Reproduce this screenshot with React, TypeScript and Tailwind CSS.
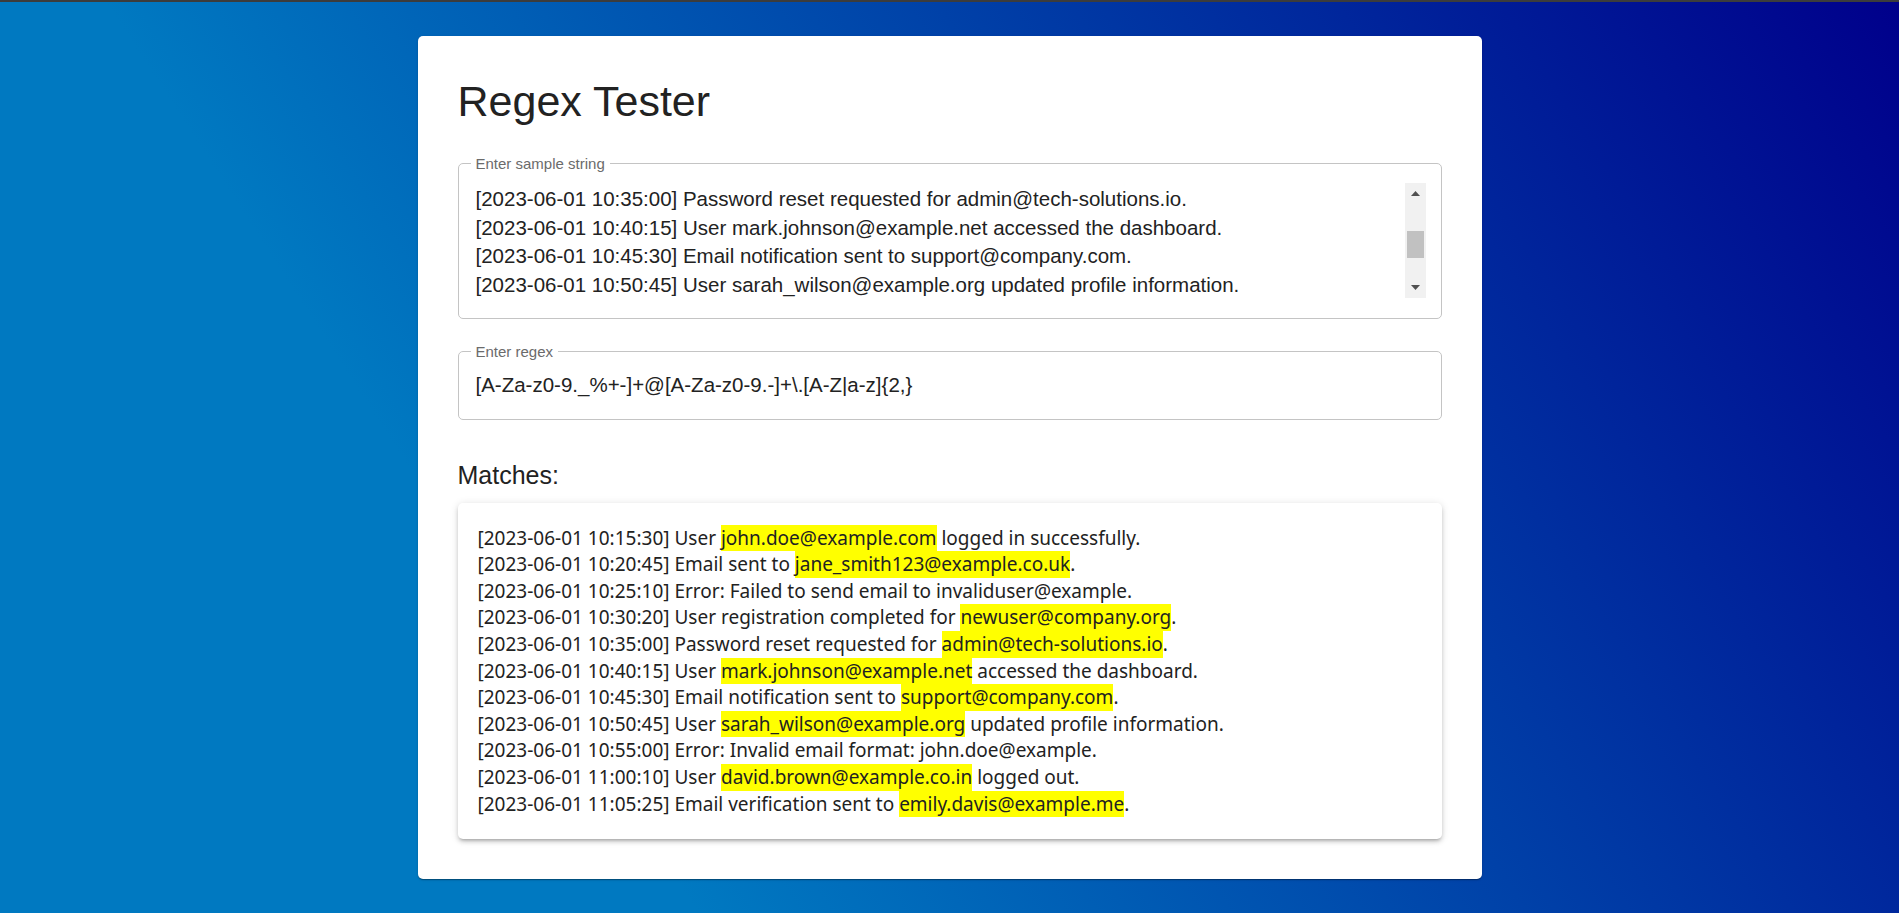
import React, { useLayoutEffect, useMemo, useRef, useState } from "react";

const SAMPLE = `[2023-06-01 10:15:30] User john.doe@example.com logged in successfully.
[2023-06-01 10:20:45] Email sent to jane_smith123@example.co.uk.
[2023-06-01 10:25:10] Error: Failed to send email to invaliduser@example.
[2023-06-01 10:30:20] User registration completed for newuser@company.org.
[2023-06-01 10:35:00] Password reset requested for admin@tech-solutions.io.
[2023-06-01 10:40:15] User mark.johnson@example.net accessed the dashboard.
[2023-06-01 10:45:30] Email notification sent to support@company.com.
[2023-06-01 10:50:45] User sarah_wilson@example.org updated profile information.
[2023-06-01 10:55:00] Error: Invalid email format: john.doe@example.
[2023-06-01 11:00:10] User david.brown@example.co.in logged out.
[2023-06-01 11:05:25] Email verification sent to emily.davis@example.me.`;

const DEFAULT_REGEX = "[A-Za-z0-9._%+-]+@[A-Za-z0-9.-]+\\.[A-Z|a-z]{2,}";

function highlight(line: string, pattern: RegExp | null) {
  if (!pattern) return [line];
  const parts: React.ReactNode[] = [];
  let last = 0;
  for (const m of line.matchAll(pattern)) {
    if (!m[0]) continue;
    const start = m.index ?? 0;
    if (start > last) parts.push(line.slice(last, start));
    parts.push(
      <span key={start} className="inline-block bg-[#ffff00]">
        {m[0]}
      </span>
    );
    last = start + m[0].length;
  }
  if (last < line.length) parts.push(line.slice(last));
  return parts;
}

function OutlinedField({
  label,
  className,
  children,
}: {
  label: string;
  className: string;
  children: React.ReactNode;
}) {
  return (
    <div className={`relative rounded-[5px] border border-[#c4c4c4] ${className}`}>
      <span className="absolute left-[12px] top-[-9px] bg-white px-[5px] text-[15px] leading-[17px] text-[#6b6b6b]">
        {label}
      </span>
      {children}
    </div>
  );
}

function FakeScrollbar() {
  return (
    <div className="flex w-[21px] shrink-0 flex-col bg-[#f1f1f1]">
      <div className="flex h-[21px] items-center justify-center">
        <svg width="9" height="5" viewBox="0 0 9 5">
          <path d="M4.5 0L9 5H0z" fill="#505050" />
        </svg>
      </div>
      <div className="flex-1 px-[2px] pt-[27px]">
        <div className="h-[27px] bg-[#c1c1c1]" />
      </div>
      <div className="flex h-[21px] items-center justify-center">
        <svg width="9" height="5" viewBox="0 0 9 5">
          <path d="M0 0H9L4.5 5z" fill="#505050" />
        </svg>
      </div>
    </div>
  );
}

export default function App() {
  const [sample, setSample] = useState(SAMPLE);
  const [regex, setRegex] = useState(DEFAULT_REGEX);
  const areaRef = useRef<HTMLTextAreaElement>(null);

  useLayoutEffect(() => {
    // start scrolled to the middle of the log, like the screenshot
    if (areaRef.current) areaRef.current.scrollTop = 113;
  }, []);

  const pattern = useMemo(() => {
    try {
      return regex ? new RegExp(regex, "g") : null;
    } catch {
      return null;
    }
  }, [regex]);

  const lines = sample.split("\n");

  return (
    <div className="flex min-h-screen items-center justify-center border-t-2 border-[#3c3c3c] bg-[linear-gradient(57deg,#0079c1_28%,#00008b_100%)] font-['Liberation_Sans',Arial,sans-serif]">
      <div className="w-[1064px] rounded-[5px] bg-white p-10 shadow-[0_2px_1px_-1px_rgba(0,0,0,0.2),0_1px_1px_0_rgba(0,0,0,0.14),0_1px_3px_0_rgba(0,0,0,0.12)]">
        <h1 className="text-[43px] leading-[51px] text-[#222]">Regex Tester</h1>

        <OutlinedField label="Enter sample string" className="mt-[36px] flex pt-[19px] pb-[20px] pl-[17px] pr-[15px]">
          <textarea
            ref={areaRef}
            value={sample}
            onChange={(e) => setSample(e.target.value)}
            spellCheck={false}
            className="h-[115px] flex-1 resize-none overflow-hidden whitespace-pre bg-transparent p-0 text-[20.5px] leading-[28.75px] text-[#222] outline-none"
          />
          <FakeScrollbar />
        </OutlinedField>

        <OutlinedField label="Enter regex" className="mt-[32px] px-[17px] py-[19px]">
          <input
            value={regex}
            onChange={(e) => setRegex(e.target.value)}
            spellCheck={false}
            className="block h-[28.75px] w-full bg-transparent p-0 text-[20.5px] leading-[28.75px] text-[#222] outline-none"
          />
        </OutlinedField>

        <h2 className="mt-[35px] text-[25px] leading-[40px] text-[#222]">Matches:</h2>

        <div className="mt-[8px] rounded-[5px] bg-white px-5 py-[22px] font-['Noto_Sans',sans-serif] text-[19px] leading-[26.6px] text-[#222] shadow-[0_3px_3px_-2px_rgba(0,0,0,0.2),0_3px_4px_0_rgba(0,0,0,0.14),0_1px_8px_0_rgba(0,0,0,0.12)]">
          {lines.map((line, i) => (
            <div key={i} className="whitespace-pre">
              {highlight(line, pattern)}
            </div>
          ))}
        </div>
      </div>
    </div>
  );
}
